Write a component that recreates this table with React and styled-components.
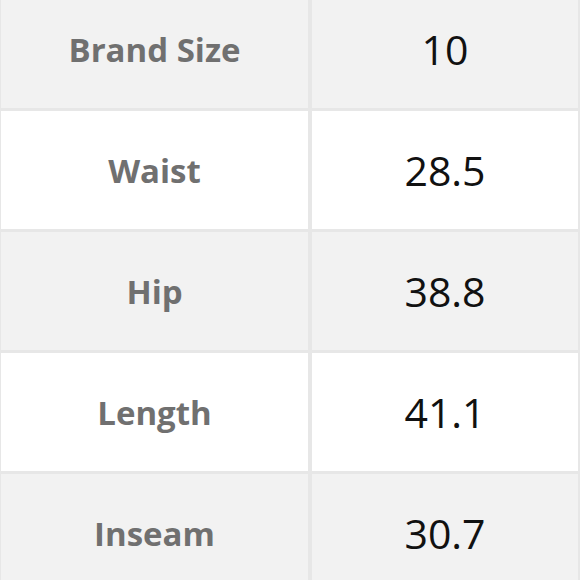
import React from 'react'
import styled, { createGlobalStyle } from 'styled-components'

const GlobalStyle = createGlobalStyle`
  html, body {
    margin: 0;
    padding: 0;
    width: 580px;
    height: 580px;
    overflow: hidden;
    background: #e7e7e7;
  }
`;

const Frame = styled.div`
  width: 580px;
  height: 580px;
  overflow: hidden;
  background: #e7e7e7;
`;

const Table = styled.div`
  display: grid;
  grid-template-columns: 307px 1fr;
  grid-auto-rows: 118px;
  column-gap: 4px;
  row-gap: 3px;
  padding: 0 2px 0 1px;
  margin-top: -10px;
`;

const Cell = styled.div`
  display: flex;
  align-items: center;
  justify-content: center;
  background: ${({ $shaded }) => ($shaded ? '#f2f2f2' : '#ffffff')};
`;

const Label = styled.span`
  font-family: "Open Sans", "Noto Sans", sans-serif;
  font-weight: 700;
  font-size: 33px;
  color: #707070;
`;

const Value = styled.span`
  font-family: "Open Sans", "Noto Sans", sans-serif;
  font-weight: 400;
  font-size: 41px;
  color: #111111;
`;

const rows = [
  { label: 'Brand Size', value: '10' },
  { label: 'Waist', value: '28.5' },
  { label: 'Hip', value: '38.8' },
  { label: 'Length', value: '41.1' },
  { label: 'Inseam', value: '30.7' },
];

export default function App() {
  return (
    <Frame>
      <GlobalStyle />
      <Table>
        {rows.map((row, i) => (
          <React.Fragment key={row.label}>
            <Cell $shaded={i % 2 === 0}>
              <Label>{row.label}</Label>
            </Cell>
            <Cell $shaded={i % 2 === 0}>
              <Value>{row.value}</Value>
            </Cell>
          </React.Fragment>
        ))}
      </Table>
    </Frame>
  )
}
